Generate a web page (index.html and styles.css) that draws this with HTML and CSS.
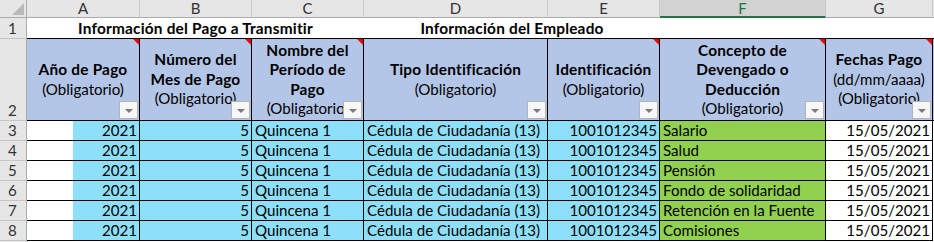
FILE: index.html
```html
<!DOCTYPE html>
<html lang="es">
<head>
<meta charset="utf-8">
<title>Hoja</title>
<link rel="stylesheet" href="styles.css">
</head>
<body>
<div class="sheet">
  <div class="corner"><span class="corner-tri"></span></div>
  <div class="colh">A</div>
  <div class="colh">B</div>
  <div class="colh">C</div>
  <div class="colh">D</div>
  <div class="colh">E</div>
  <div class="colh sel">F</div>
  <div class="colh">G</div>
  <div class="colh last"></div>

  <div class="rowh">1</div>
  <div class="r1 span-ac">Información del Pago a Transmitir</div>
  <div class="r1 span-de">Información del Empleado</div>
  <div class="r1"></div>
  <div class="r1"></div>
  <div class="r1"></div>

  <div class="rowh">2</div>
  <div class="hd note"><div class="lines"><b>Año de Pago</b><span>(Obligatorio)</span></div><span class="dd"></span></div>
  <div class="hd note"><div class="lines"><b>Número del</b><b>Mes de Pago</b><span>(Obligatorio)</span></div><span class="dd"></span></div>
  <div class="hd note"><div class="lines"><b>Nombre del</b><b>Período de</b><b>Pago</b><span>(Obligatorio)</span></div><span class="dd"></span></div>
  <div class="hd"><div class="lines"><b>Tipo Identificación</b><span>(Obligatorio)</span></div><span class="dd"></span></div>
  <div class="hd note"><div class="lines"><b>Identificación</b><span>(Obligatorio)</span></div><span class="dd"></span></div>
  <div class="hd note"><div class="lines"><b>Concepto de</b><b>Devengado o</b><b>Deducción</b><span>(Obligatorio)</span></div><span class="dd"></span></div>
  <div class="hd note"><div class="lines"><b>Fechas Pago</b><span>(dd/mm/aaaa)</span><span>(Obligatorio)</span></div><span class="dd"></span></div>
  <div class="hd last"></div>

  <div class="rowh">3</div>
  <div class="c cy-a num">2021</div><div class="c cy num">5</div><div class="c cy">Quincena 1</div><div class="c cy">Cédula de Ciudadanía (13)</div><div class="c cy num">1001012345</div><div class="c gr">Salario</div><div class="c wh num">15/05/2021</div><div class="c last"></div>

  <div class="rowh">4</div>
  <div class="c cy-a num">2021</div><div class="c cy num">5</div><div class="c cy">Quincena 1</div><div class="c cy">Cédula de Ciudadanía (13)</div><div class="c cy num">1001012345</div><div class="c gr">Salud</div><div class="c wh num">15/05/2021</div><div class="c last"></div>

  <div class="rowh">5</div>
  <div class="c cy-a num">2021</div><div class="c cy num">5</div><div class="c cy">Quincena 1</div><div class="c cy">Cédula de Ciudadanía (13)</div><div class="c cy num">1001012345</div><div class="c gr">Pensión</div><div class="c wh num">15/05/2021</div><div class="c last"></div>

  <div class="rowh">6</div>
  <div class="c cy-a num">2021</div><div class="c cy num">5</div><div class="c cy">Quincena 1</div><div class="c cy">Cédula de Ciudadanía (13)</div><div class="c cy num">1001012345</div><div class="c gr">Fondo de solidaridad</div><div class="c wh num">15/05/2021</div><div class="c last"></div>

  <div class="rowh">7</div>
  <div class="c cy-a num">2021</div><div class="c cy num">5</div><div class="c cy">Quincena 1</div><div class="c cy">Cédula de Ciudadanía (13)</div><div class="c cy num">1001012345</div><div class="c gr">Retención en la Fuente</div><div class="c wh num">15/05/2021</div><div class="c last"></div>

  <div class="rowh">8</div>
  <div class="c cy-a num">2021</div><div class="c cy num">5</div><div class="c cy">Quincena 1</div><div class="c cy">Cédula de Ciudadanía (13)</div><div class="c cy num">1001012345</div><div class="c gr">Comisiones</div><div class="c wh num">15/05/2021</div><div class="c last"></div>

  <div class="rowh"></div>
  <div class="e"></div><div class="e"></div><div class="e"></div><div class="e"></div><div class="e"></div><div class="e"></div><div class="e"></div><div class="e"></div>
</div>
</body>
</html>
```

FILE: styles.css
```css
* { box-sizing: border-box; }
html, body { margin: 0; padding: 0; background: #ffffff; }
body {
  font-family: Lato, "Liberation Sans", sans-serif;
  font-size: 15.1px;
  color: #000;
  overflow: hidden;
}
b {
  font-weight: bold;
  font-size: 15.4px;
  letter-spacing: 0.2px;
}
.sheet {
  display: grid;
  grid-template-columns: 27px 113px 112px 112px 184px 112px 166px 107px 1px;
  grid-template-rows: 18px 21px 82px repeat(7, 20px);
  width: 934px;
  height: 242px;
  overflow: hidden;
}
.corner {
  background: #e6e6e6;
  border-right: 1px solid #ababab;
  border-bottom: 1px solid #ababab;
  position: relative;
}
.corner-tri {
  position: absolute;
  right: 2px;
  bottom: 2px;
  width: 0;
  height: 0;
  border-left: 12px solid transparent;
  border-bottom: 12px solid #b9b9b9;
}
.colh {
  background: #e6e6e6;
  border-right: 1px solid #c9c9c9;
  border-bottom: 1px solid #ababab;
  color: #333;
  text-align: center;
  line-height: 17px;
  font-size: 15px;
}
.colh.sel {
  background: #d2d2d2;
  color: #217346;
  border-bottom: 2px solid #217346;
}
.colh.last { border-right: none; }
.rowh {
  background: #e6e6e6;
  border-right: 1px solid #ababab;
  border-bottom: 1px solid #c6c6c6;
  color: #333;
  display: flex;
  align-items: flex-end;
  justify-content: center;
  line-height: 19px;
  padding-right: 1px;
}
.r1 {
  border-bottom: 1px solid #000;
  font-weight: bold;
  font-size: 15.4px;
  letter-spacing: 0.2px;
  text-align: center;
  line-height: 20px;
  white-space: nowrap;
}
.span-ac { grid-column: 2 / 5; }
.span-de { grid-column: 5 / 7; }
.hd {
  background: #b4c6e7;
  border-right: 1px solid #000;
  border-bottom: 1px solid #000;
  position: relative;
  display: flex;
  align-items: center;
  justify-content: center;
  overflow: hidden;
}
.hd.last { border-right: none; }
.lines {
  display: flex;
  flex-direction: column;
  align-items: center;
  line-height: 19.5px;
  white-space: nowrap;
}
.lines span { font-weight: normal; }
.dd {
  position: absolute;
  right: 1px;
  bottom: 1px;
  width: 19px;
  height: 18px;
  background: #f7f7f7;
  border: 1px solid #b3b3b3;
}
.dd::after {
  content: "";
  position: absolute;
  left: 5px;
  top: 7px;
  border-left: 4px solid transparent;
  border-right: 4px solid transparent;
  border-top: 4px solid #7a7a7a;
}
.hd.last .dd { display: none; }
.note::before {
  content: "";
  position: absolute;
  top: 0;
  right: 0;
  border-left: 6px solid transparent;
  border-top: 6px solid #ff0000;
}
.c {
  border-right: 1px solid #000;
  border-bottom: 1px solid #000;
  line-height: 19px;
  padding: 0 3px;
  white-space: nowrap;
  overflow: hidden;
}
.c.num { text-align: right; padding-right: 2px; }
.cy { background: #8ee0fa; }
.cy-a { background: linear-gradient(to right, #ffffff 0, #ffffff 46px, #8ee0fa 46px); }
.gr { background: #92d050; }
.wh { background: #ffffff; }
.c.last { border-right: none; border-bottom: none; }
.e { background: #fff; }
```
